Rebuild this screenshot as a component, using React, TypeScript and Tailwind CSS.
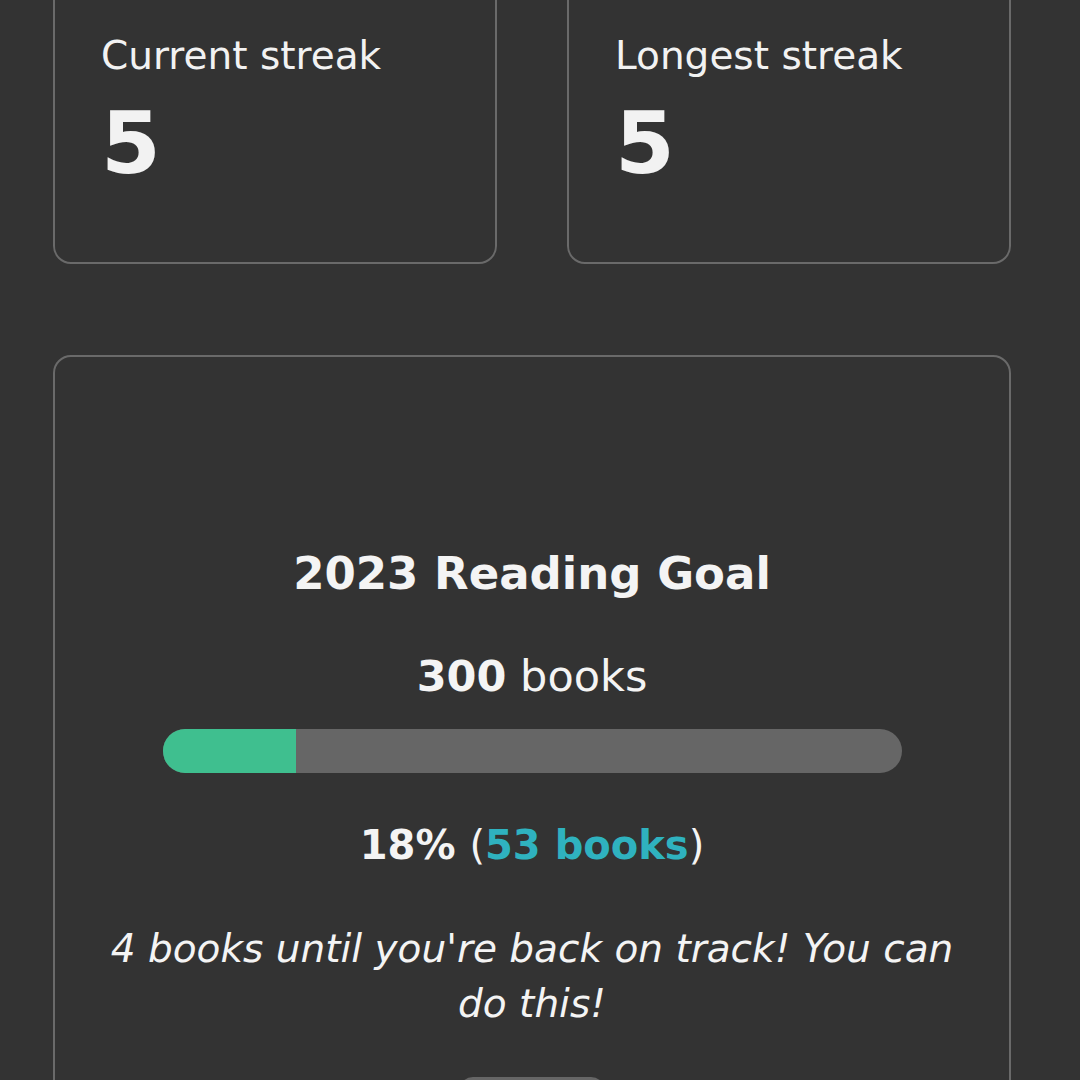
import React from 'react';

const StreakCard = ({ label, value }: { label: string; value: number }) => (
    <div className="flex-1 rounded-[18px] border-2 border-[#6a6a6a] px-[46px] pt-[57px] pb-[73px]">
        <div className="text-[39px] leading-[46px] text-[#f2f2f2]">{label}</div>
        <div className="mt-[18px] text-[86px] leading-[92px] font-bold text-[#f2f2f2]">{value}</div>
    </div>
);

const ReadingGoal = () => {
    const goal = 300;
    const read = 53;
    const pct = Math.round((read / goal) * 100);

    return (
        <div className="rounded-[18px] border-2 border-[#6a6a6a] flex flex-col items-center pt-[189px] px-[46px] pb-[40px]">
            <h2 className="text-[45px] leading-[56px] font-bold text-[#f4f4f4]">2023 Reading Goal</h2>
            <div className="mt-[49px] text-[43px] leading-[50px] text-[#f4f4f4]">
                <span className="font-bold">{goal}</span> books
            </div>
            <div className="mt-[28px] w-[739px] h-[44px] rounded-full bg-[#666666] overflow-hidden flex">
                <div className="h-full bg-[#3fbf8f]" style={{ width: `${pct}%` }} />
            </div>
            <div className="mt-[47px] text-[40px] leading-[50px] font-bold text-[#f4f4f4]">
                {pct}% <span className="font-normal">(</span><span className="text-[#2fb2bf]">{read} books</span><span className="font-normal">)</span>
            </div>
            <p className="mt-[51px] text-[39px] leading-[55px] italic text-[#f4f4f4] text-center">
                4 books until you're back on track! You can do this!
            </p>
            <button className="mt-[46px] w-[146px] h-[56px] rounded-[14px] bg-[#666666] text-[#f4f4f4] text-[28px]">Edit</button>
        </div>
    );
};

export default function App() {
    return (
        <div className="w-[1080px] h-[1080px] overflow-hidden bg-[#333333]" style={{ fontFamily: '"DejaVu Sans", "Open Sans", sans-serif' }}>
            <div className="-mt-[26px] pl-[53px] pr-[69px]">
                <div className="flex gap-[70px]">
                    <StreakCard label="Current streak" value={5} />
                    <StreakCard label="Longest streak" value={5} />
                </div>
                <div className="mt-[91px]">
                    <ReadingGoal />
                </div>
            </div>
        </div>
    );
}
